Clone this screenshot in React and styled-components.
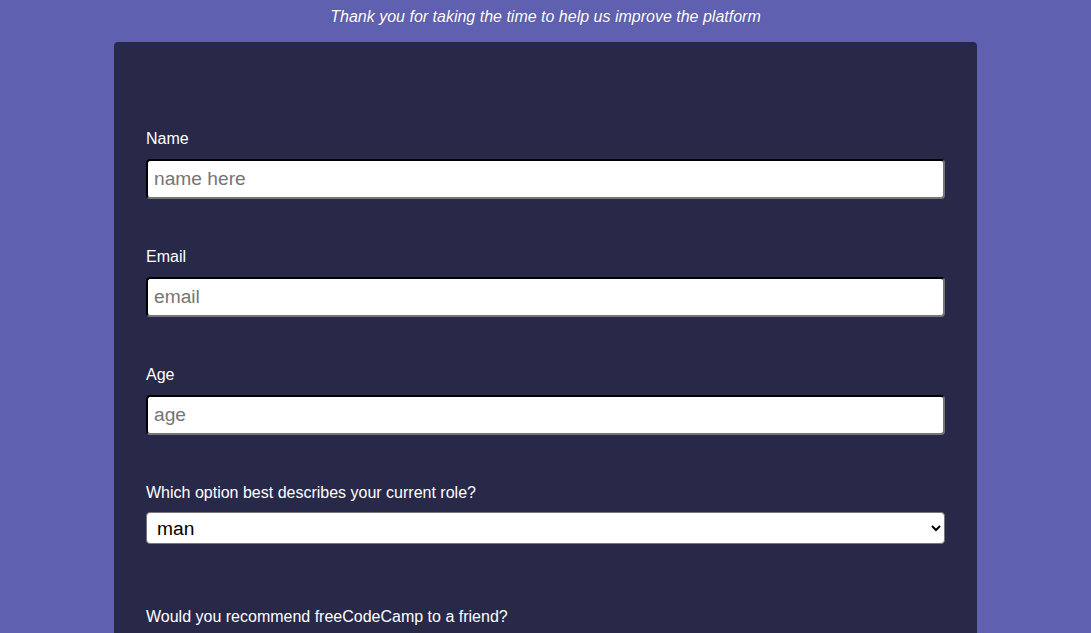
import React from 'react';
import styled, { createGlobalStyle } from 'styled-components';

const GlobalStyle = createGlobalStyle`
  html, body {
    margin: 0;
    padding: 0;
    background: #6060b1;
    font-family: "Liberation Sans", Arial, sans-serif;
    color: #fff;
  }
`;

const Page = styled.div`
  display: flex;
  flex-direction: column;
  align-items: center;
`;

const Description = styled.p`
  margin: 8px 0 16px;
  font-size: 16px;
  line-height: 18px;
  font-style: italic;
  text-shadow: 0 0 1px rgba(0, 0, 0, 0.25);
`;

const Card = styled.form`
  box-sizing: border-box;
  width: 863px;
  background: #282849;
  border-radius: 4px;
  padding: 88px 32px 40px;
`;

const Group = styled.div`
  margin-bottom: ${p => p.gap || 49}px;
`;

const Label = styled.label`
  display: block;
  font-size: 16px;
  line-height: 18px;
  margin-bottom: ${p => p.space || 11}px;
`;

const Input = styled.input`
  box-sizing: border-box;
  display: block;
  width: 100%;
  height: 40px;
  padding: 0 6px;
  font-family: "Liberation Sans", Arial, sans-serif;
  font-size: 19.2px;
  color: #000;
  background: #fff;
  border: 2px inset #767676;
  border-top-color: #1e1e1e;
  border-left-color: #1e1e1e;
  border-radius: 4px;
  outline: none;

  &::placeholder {
    color: #757575;
  }
`;

const Select = styled.select`
  box-sizing: border-box;
  display: block;
  width: 100%;
  height: 32px;
  padding: 0 6px;
  font-family: "Liberation Sans", Arial, sans-serif;
  font-size: 19.2px;
  color: #000;
  background: #fff;
  border: 1px solid #767676;
  border-radius: 4px;
`;

export default function App() {
  return (
    <>
      <GlobalStyle />
      <Page>
        <Description>Thank you for taking the time to help us improve the platform</Description>
        <Card>
          <Group>
            <Label htmlFor="name">Name</Label>
            <Input id="name" type="text" placeholder="name here" />
          </Group>
          <Group>
            <Label htmlFor="email">Email</Label>
            <Input id="email" type="email" placeholder="email" />
          </Group>
          <Group>
            <Label htmlFor="age">Age</Label>
            <Input id="age" type="number" placeholder="age" />
          </Group>
          <Group gap={64}>
            <Label htmlFor="role" space={10}>Which option best describes your current role?</Label>
            <Select id="role" defaultValue="man">
              <option value="man">man</option>
              <option value="woman">woman</option>
              <option value="other">other</option>
            </Select>
          </Group>
          <Group>
            <Label>Would you recommend freeCodeCamp to a friend?</Label>
          </Group>
        </Card>
      </Page>
    </>
  );
}
